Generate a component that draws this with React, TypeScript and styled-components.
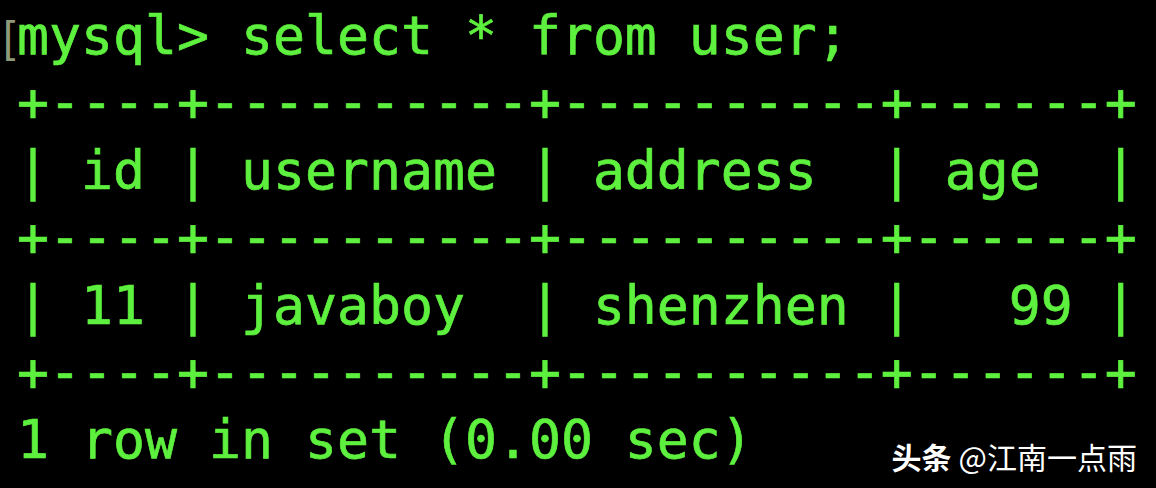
import React from "react";
import styled, { createGlobalStyle } from "styled-components";

const Global = createGlobalStyle`
  html, body { margin: 0; padding: 0; background: #000; }
  body { width: 1156px; height: 488px; overflow: hidden; }
`;

const Terminal = styled.div`
  width: 1156px;
  height: 488px;
  box-sizing: border-box;
  background: #000;
  padding: 3px 0 0 17px;
  display: flex;
  flex-direction: column;
  font-family: "DejaVu Sans Mono", "Liberation Mono", monospace;
  font-size: 53.15px;
  color: #5ef03e;
  -webkit-text-stroke: 0.7px #5ef03e;
`;

const Line = styled.div`
  height: 67.4px;
  line-height: 67.4px;
  white-space: pre;
`;

const Cursor = styled.span`
  display: inline-block;
  width: 10px;
  margin-left: -14px;
  margin-right: 4px;
  color: #8e9a7a;
  -webkit-text-stroke: 0;
  font-family: "Liberation Sans", sans-serif;
  font-size: 44px;
  vertical-align: top;
  overflow: visible;
`;

const FooterRow = styled.div`
  display: flex;
  align-items: center;
  justify-content: space-between;
  height: 67.4px;
  padding-right: 19px;
`;

const Footer = styled.span`
  white-space: pre;
  line-height: 67.4px;
`;

const Watermark = styled.span`
  font-family: "Noto Sans CJK SC", "Noto Sans", sans-serif;
  font-size: 30px;
  color: #fff;
  -webkit-text-stroke: 0;
  padding-top: 30px;
`;

const Brand = styled.b`
  font-weight: 700;
  margin-right: 7px;
`;

const border = "+----+----------+----------+------+";
const rows = [
  border,
  "| id | username | address  | age  |",
  border,
  "| 11 | javaboy  | shenzhen |   99 |",
  border,
];

export default function App() {
  return (
    <>
      <Global />
      <Terminal>
        <Line>
          <Cursor>[</Cursor>mysql&gt; select * from user;
        </Line>
        {rows.map((r, i) => (
          <Line key={i}>{r}</Line>
        ))}
        <FooterRow>
          <Footer>1 row in set (0.00 sec)</Footer>
          <Watermark>
            <Brand>头条</Brand>@江南一点雨
          </Watermark>
        </FooterRow>
      </Terminal>
    </>
  );
}
